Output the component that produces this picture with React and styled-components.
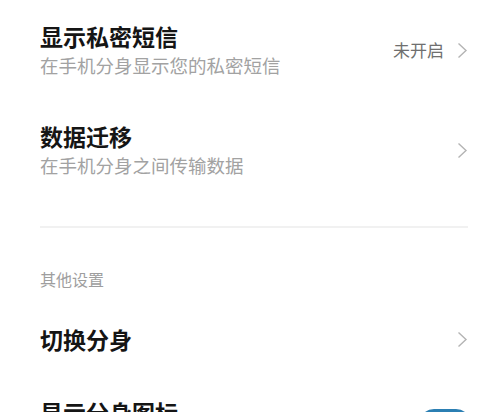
import React from 'react'
import styled, { createGlobalStyle } from 'styled-components'

const GlobalStyle = createGlobalStyle`
  body {
    margin: 0;
    padding: 0;
    background: #ffffff;
    font-family: "Noto Sans CJK SC", "Noto Sans", sans-serif;
  }
  *, *::before, *::after { box-sizing: border-box; }
`

const Page = styled.div`
  width: 500px;
  height: 412px;
  overflow: hidden;
  background: #fff;
  padding: 0 32px 0 40px;
`

const Row = styled.div`
  display: flex;
  justify-content: space-between;
  height: ${({ h }) => h}px;
  padding-top: ${({ pt }) => pt || 0}px;
  align-items: ${({ top }) => (top ? 'flex-start' : 'center')};
`

const TextBlock = styled.div`
  display: flex;
  flex-direction: column;
`

const Title = styled.div`
  font-size: 23px;
  line-height: 30px;
  font-weight: 600;
  color: #151515;
`

const Sub = styled.div`
  font-size: 18.5px;
  line-height: 28px;
  color: #a2a2a2;
`

const Right = styled.div`
  display: flex;
  align-items: center;
  gap: 13px;
`

const Value = styled.span`
  font-size: 17px;
  line-height: 24px;
  color: #6f6f6f;
`

const Divider = styled.div`
  height: 2px;
  background: #f1f1f1;
  margin-top: 26px;
`

const SectionHeader = styled.div`
  font-size: 16px;
  line-height: 22px;
  color: #9e9e9e;
  padding-top: 40px;
  padding-bottom: 9px;
`

const Toggle = styled.div`
  width: 52px;
  height: 30px;
  border-radius: 15px;
  background: #2b7fb3;
  position: relative;
  margin-top: 12px;
  margin-right: -3px;
  &::after {
    content: '';
    position: absolute;
    right: 4px;
    top: 4px;
    width: 22px;
    height: 22px;
    border-radius: 50%;
    background: #fff;
  }
`

const Chevron = () => (
  <svg width="11" height="17" viewBox="0 0 11 17">
    <polyline points="1.5,1.5 9,8.5 1.5,15.5" fill="none" stroke="#b4b4b4" strokeWidth="1.4" />
  </svg>
)

const App = () => (
  <>
    <GlobalStyle />
    <Page>
      <Row h={100}>
        <TextBlock>
          <Title>显示私密短信</Title>
          <Sub>在手机分身显示您的私密短信</Sub>
        </TextBlock>
        <Right>
          <Value>未开启</Value>
          <Chevron />
        </Right>
      </Row>
      <Row h={100}>
        <TextBlock>
          <Title>数据迁移</Title>
          <Sub>在手机分身之间传输数据</Sub>
        </TextBlock>
        <Right>
          <Chevron />
        </Right>
      </Row>
      <Divider />
      <SectionHeader>其他设置</SectionHeader>
      <Row h={80}>
        <TextBlock>
          <Title>切换分身</Title>
        </TextBlock>
        <Right>
          <Chevron />
        </Right>
      </Row>
      <Row h={100} pt={18} top>
        <TextBlock>
          <Title>显示分身图标</Title>
        </TextBlock>
        <Toggle />
      </Row>
    </Page>
  </>
)

export default App
